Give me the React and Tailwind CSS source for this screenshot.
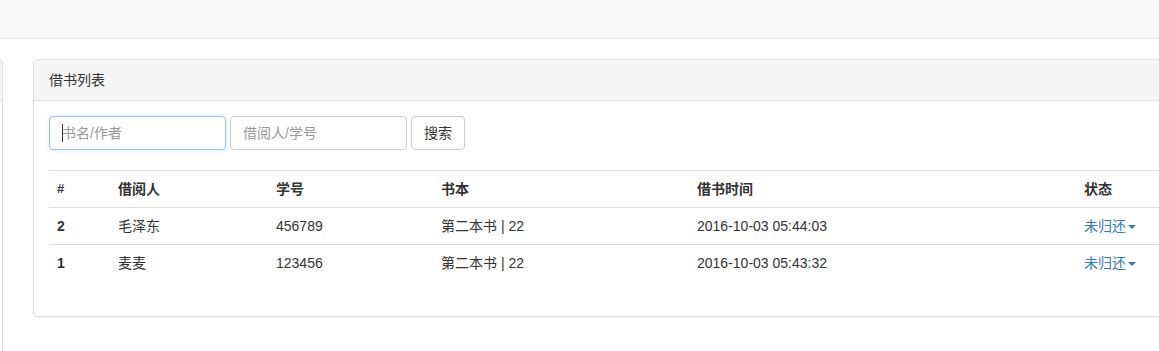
import React from "react";

const rows = [
  { id: 2, name: "毛泽东", no: "456789", book: "第二本书 | 22", time: "2016-10-03 05:44:03", status: "未归还" },
  { id: 1, name: "麦麦", no: "123456", book: "第二本书 | 22", time: "2016-10-03 05:43:32", status: "未归还" },
];

const font = { fontFamily: '"Liberation Sans", Arial, "Noto Sans CJK SC", sans-serif' };

export default function App() {
  return (
    <div className="w-[1159px] h-[351px] overflow-hidden bg-white text-[14px] leading-[20px] text-[#333]" style={font}>
      {/* navbar */}
      <div className="h-[39px] bg-[#f8f8f8] border-b border-[#e7e7e7]" />

      <div className="flex items-start gap-[30px] mt-[20px]">
        {/* left panel, mostly off screen */}
        <div className="shrink-0 w-[203px] -ml-[200px] h-[320px] border border-[#ddd] rounded-[4px] bg-white">
          <div className="h-[41px] bg-[#f5f5f5] border-b border-[#ddd] rounded-t-[4px]" />
        </div>

        {/* main panel */}
        <div className="shrink-0 w-[1180px] border border-[#ddd] rounded-[4px] bg-white shadow-[0_1px_1px_rgba(0,0,0,0.05)]">
          <div className="h-[41px] px-[15px] py-[10px] bg-[#f5f5f5] border-b border-[#ddd] rounded-t-[3px]">
            借书列表
          </div>
          <div className="p-[15px]">
            <div className="flex gap-[4px] h-[34px]">
              <div className="w-[177px] h-[34px] border border-[#9fc2e0] rounded-[4px] px-[12px] py-[6px] shadow-[0_0_4px_rgba(102,175,233,0.35)] flex items-center">
                <span className="w-px h-[18px] bg-[#333] -mr-px" />
                <span className="text-[#999]">书名/作者</span>
              </div>
              <div className="w-[177px] h-[34px] border border-[#ccc] rounded-[4px] px-[12px] py-[6px] text-[#999]">
                借阅人/学号
              </div>
              <button className="h-[34px] px-[12px] border border-[#ccc] rounded-[4px] bg-white text-[#333]">
                搜索
              </button>
            </div>

            <table className="mt-[20px] mb-[20px] border-collapse w-[1148px] table-fixed">
              <colgroup>
                <col className="w-[61px]" />
                <col className="w-[158px]" />
                <col className="w-[165px]" />
                <col className="w-[256px]" />
                <col className="w-[387px]" />
                <col />
              </colgroup>
              <thead>
                <tr className="border-t border-[#ddd]">
                  <th className="p-[8px] text-left font-bold text-[13px]">#</th>
                  <th className="p-[8px] text-left font-bold">借阅人</th>
                  <th className="p-[8px] text-left font-bold">学号</th>
                  <th className="p-[8px] text-left font-bold">书本</th>
                  <th className="p-[8px] text-left font-bold">借书时间</th>
                  <th className="p-[8px] text-left font-bold">状态</th>
                </tr>
              </thead>
              <tbody>
                {rows.map((r) => (
                  <tr key={r.id} className="border-t border-[#ddd]">
                    <td className="p-[8px] font-bold">{r.id}</td>
                    <td className="p-[8px]">{r.name}</td>
                    <td className="p-[8px]">{r.no}</td>
                    <td className="p-[8px]">{r.book}</td>
                    <td className="p-[8px]">{r.time}</td>
                    <td className="p-[8px]">
                      <span className="text-[#337ab7] inline-flex items-center">
                        {r.status}
                        <span className="ml-[2px] mt-[2px] w-0 h-0 border-t-[4px] border-t-[#337ab7] border-x-[4px] border-x-transparent" />
                      </span>
                    </td>
                  </tr>
                ))}
              </tbody>
            </table>
          </div>
        </div>
      </div>
    </div>
  );
}
